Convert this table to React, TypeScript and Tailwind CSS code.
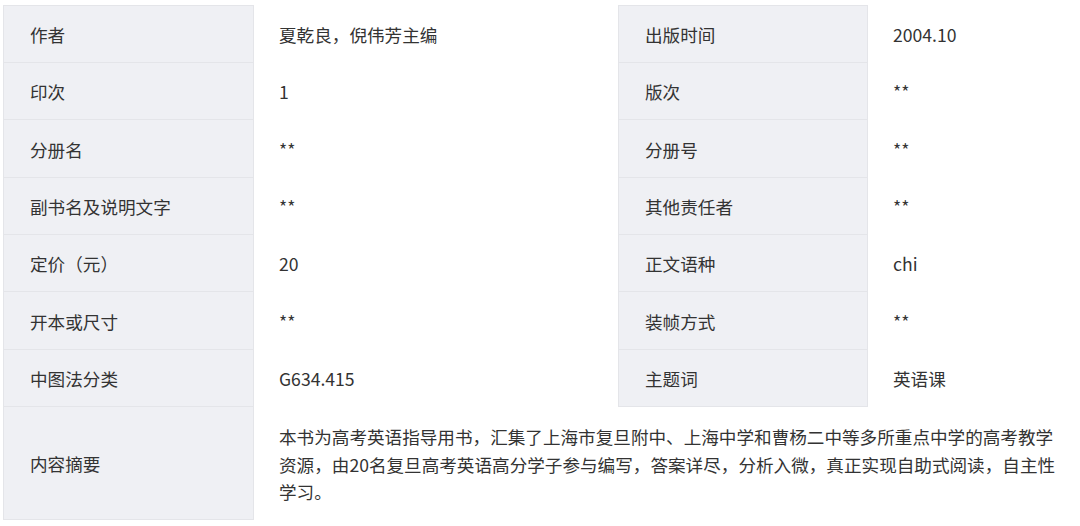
type Cell = { label: string; value: string };

const rows: [Cell, Cell][] = [
  [{ label: "作者", value: "夏乾良，倪伟芳主编" }, { label: "出版时间", value: "2004.10" }],
  [{ label: "印次", value: "1" }, { label: "版次", value: "**" }],
  [{ label: "分册名", value: "**" }, { label: "分册号", value: "**" }],
  [{ label: "副书名及说明文字", value: "**" }, { label: "其他责任者", value: "**" }],
  [{ label: "定价（元）", value: "20" }, { label: "正文语种", value: "chi" }],
  [{ label: "开本或尺寸", value: "**" }, { label: "装帧方式", value: "**" }],
  [{ label: "中图法分类", value: "G634.415" }, { label: "主题词", value: "英语课" }],
];

const heights = ["h-[57px]", "h-[57px]", "h-[58px]", "h-[57px]", "h-[57px]", "h-[58px]", "h-[57px]"];

const labelCls =
  "border border-[#e4e5e9] bg-[#eff0f4] pl-[26px] pr-3 pt-[2px] align-middle text-left font-normal";
const valueCls = "pl-[25px] pr-3 pt-[2px] align-middle text-left";

export default function App() {
  return (
    <div
      className="min-h-[526px] bg-white pl-[3px] pt-[5px] text-[17.6px] leading-[27.5px] text-[#333333]"
      style={{ fontFamily: '"Noto Sans CJK SC", "Noto Sans", sans-serif' }}
    >
      <table className="w-[1077px] table-fixed border-collapse">
        <colgroup>
          <col className="w-[250px]" />
          <col className="w-[365px]" />
          <col className="w-[249px]" />
          <col className="w-[213px]" />
        </colgroup>
        <tbody>
          {rows.map((r, i) => (
            <tr key={i} className={heights[i]}>
              <th className={labelCls}>{r[0].label}</th>
              <td className={valueCls}>{r[0].value}</td>
              <th className={labelCls}>{r[1].label}</th>
              <td className={valueCls}>{r[1].value}</td>
            </tr>
          ))}
          <tr className="h-[113px]">
            <th className={labelCls}>内容摘要</th>
            <td colSpan={3} className="pl-[25px] pr-[18px] pt-[2px] align-middle text-left">
              本书为高考英语指导用书，汇集了上海市复旦附中、上海中学和曹杨二中等多所重点中学的高考教学资源，由20名复旦高考英语高分学子参与编写，答案详尽，分析入微，真正实现自助式阅读，自主性学习。
            </td>
          </tr>
        </tbody>
      </table>
    </div>
  );
}
